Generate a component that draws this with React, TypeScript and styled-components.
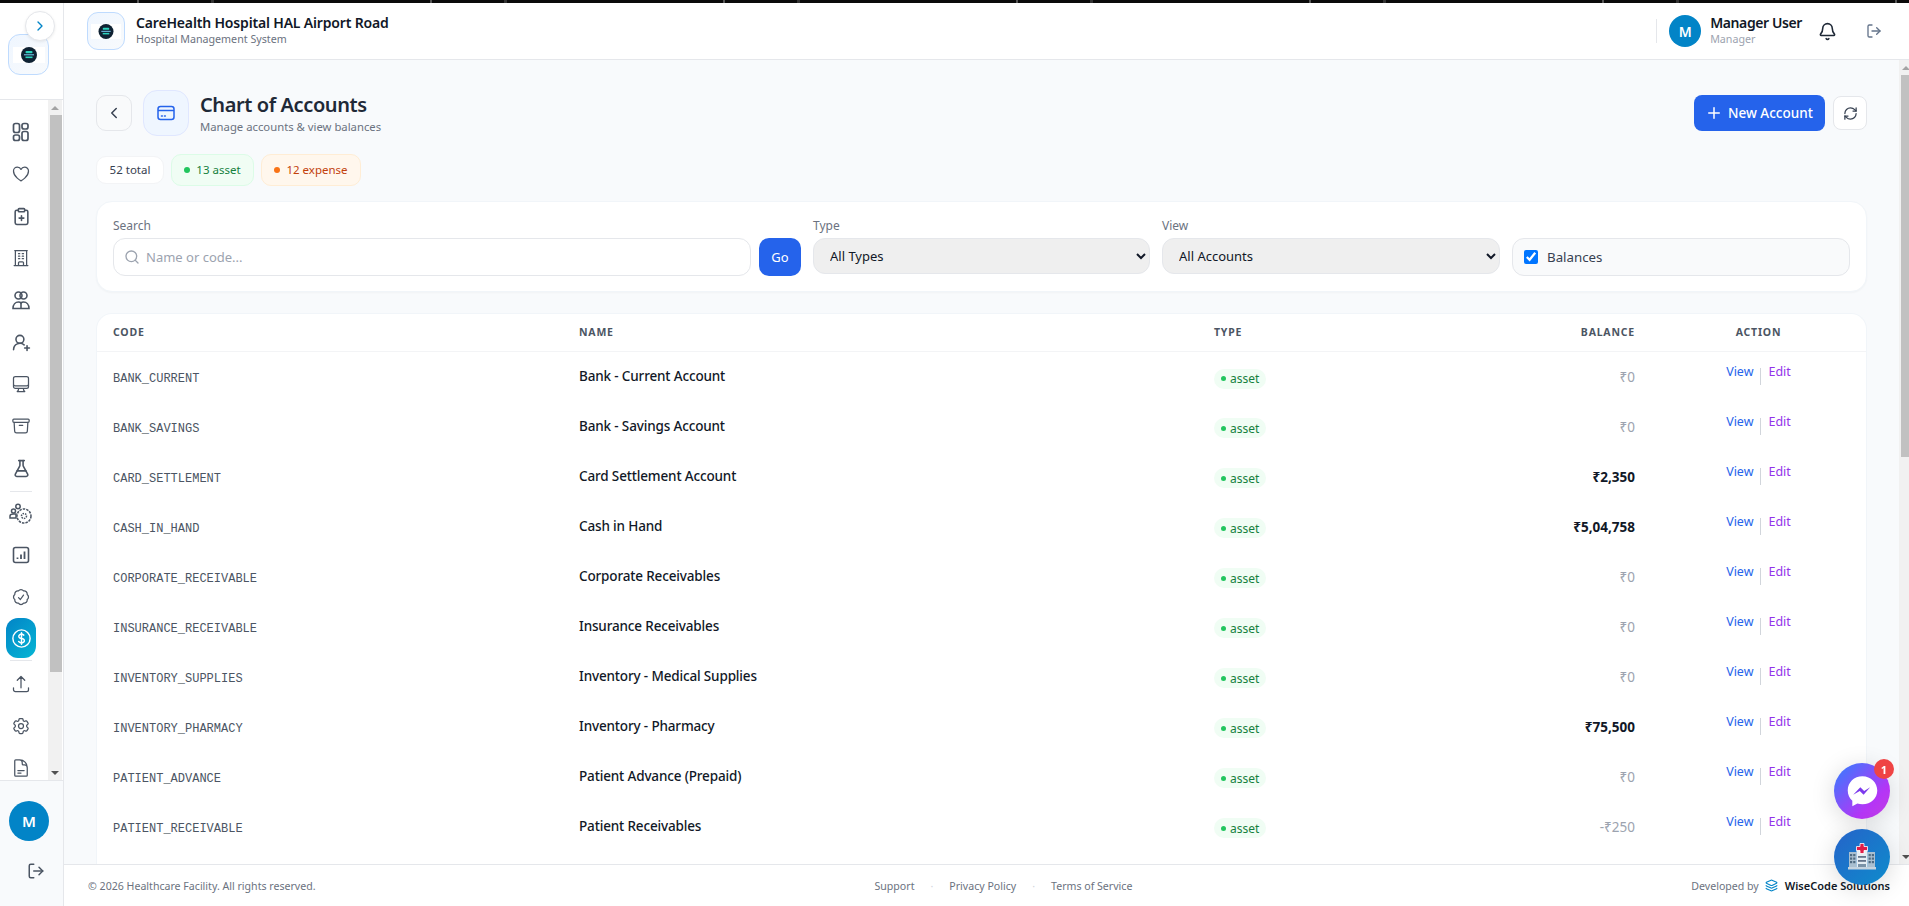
import React from 'react';
import styled, { createGlobalStyle } from 'styled-components';
import {
  Bell,
  ChevronLeft,
  ChevronRight,
  ClipboardPlus,
  FlaskConical,
  Layers,
  LogOut,
  Plus,
  RefreshCw,
  Search,
  UserRoundPlus,
} from 'lucide-react';
import {
  HiOutlineArchiveBox,
  HiOutlineArrowUpTray,
  HiOutlineBuildingOffice,
  HiOutlineCheckBadge,
  HiOutlineCog6Tooth,
  HiOutlineComputerDesktop,
  HiOutlineCurrencyDollar,
  HiOutlineDocumentText,
  HiOutlineHeart,
} from 'react-icons/hi2';

const FONT = '"Noto Sans", "Open Sans", sans-serif';

const GlobalStyle = createGlobalStyle`
  html, body {
    margin: 0;
    height: 100%;
    overflow: hidden;
    font-family: ${FONT};
    color: #111827;
  }
  * { box-sizing: border-box; }
`;

const Page = styled.div`
  height: 906px;
  display: flex;
  flex-direction: column;
  background: #fff;
`;
const NoiseStrip = styled.div`
  height: 3px;
  flex: none;
  background: repeating-linear-gradient(90deg, #0b0b0b 0 137px, #555 137px 139px, #0b0b0b 139px 211px, #333 211px 214px, #0b0b0b 214px 293px);
`;
const Shell = styled.div`
  flex: 1;
  min-height: 0;
  display: flex;
`;
const Sidebar = styled.aside`
  width: 64px;
  flex: none;
  display: flex;
  flex-direction: column;
  border-right: 1px solid #e5e7eb;
  background: #fff;
`;
const SideTop = styled.div`
  height: 97px;
  flex: none;
  position: relative;
  padding: 31px 0 0 8px;
  border-bottom: 1px solid #e5e7eb;
`;
const LogoTile = styled.div<{ $size: number }>`
  width: ${p => p.$size}px;
  height: ${p => p.$size}px;
  flex: none;
  border-radius: ${p => Math.round(p.$size / 3.4)}px;
  border: 1px solid #bfdbfe;
  background: linear-gradient(135deg, #eff6ff, #f8fafc);
  display: flex;
  align-items: center;
  justify-content: center;
`;
const Toggle = styled.button`
  position: absolute;
  left: 25px;
  top: 8px;
  width: 30px;
  height: 30px;
  padding: 0;
  border-radius: 50%;
  border: 1px solid #e5e7eb;
  background: #fff;
  color: #0284c7;
  display: flex;
  align-items: center;
  justify-content: center;
  box-shadow: 0 1px 3px rgba(0, 0, 0, 0.08);
`;
const NavArea = styled.div`
  flex: 1;
  min-height: 0;
  display: flex;
  overflow: hidden;
`;
const NavList = styled.nav`
  width: 48px;
  flex: none;
  display: flex;
  flex-direction: column;
  align-items: center;
  padding: 11px 6px 0 0;
  overflow: hidden;
`;
const NavItem = styled.div<{ $active?: boolean; $short?: boolean }>`
  width: 30px;
  height: ${p => (p.$active || p.$short ? 40 : 42)}px;
  flex: none;
  display: flex;
  align-items: center;
  justify-content: center;
  color: ${p => (p.$active ? '#fff' : '#4b5563')};
  border-radius: 12px;
  background: ${p => (p.$active ? 'linear-gradient(135deg, #0284c7, #06b6d4)' : 'transparent')};
`;
const NavDivider = styled.div`
  width: 22px;
  height: 1px;
  flex: none;
  background: #e5e7eb;
  margin: 2px 0;
`;
const Scrollbar = styled.div<{ $width: number }>`
  width: ${p => p.$width}px;
  flex: none;
  background: #f1f1f1;
  display: flex;
  flex-direction: column;
  align-items: stretch;
`;
const ScrollArrow = styled.div<{ $down?: boolean; $offset: number }>`
  height: 15px;
  flex: none;
  display: flex;
  align-items: center;
  padding-left: ${p => p.$offset}px;
  &::before {
    content: '';
    border-left: 4px solid transparent;
    border-right: 4px solid transparent;
    ${p => (p.$down ? 'border-top: 4px solid #505050;' : 'border-bottom: 4px solid #a3a3a3;')}
  }
`;
const ScrollThumb = styled.div<{ $height: number; $inset: number }>`
  height: ${p => p.$height}px;
  flex: none;
  margin-left: ${p => p.$inset}px;
  background: #c1c1c1;
`;
const ScrollRest = styled.div`
  flex: 1;
`;
const SideBottom = styled.div`
  height: 126px;
  flex: none;
  border-top: 1px solid #e5e7eb;
  background: #f8fafc;
  display: flex;
  flex-direction: column;
  padding: 20px 0 0 9px;
`;
const Avatar = styled.div<{ $size: number }>`
  width: ${p => p.$size}px;
  height: ${p => p.$size}px;
  flex: none;
  border-radius: 50%;
  background: #0284c7;
  color: #fff;
  font-weight: 600;
  font-size: ${p => (p.$size > 36 ? 15 : 14)}px;
  display: flex;
  align-items: center;
  justify-content: center;
`;
const SideLogout = styled.div`
  margin: 21px 0 0 18px;
  color: #4b5563;
  display: flex;
`;
const Main = styled.div`
  flex: 1;
  min-width: 0;
  display: flex;
  flex-direction: column;
`;
const TopBar = styled.header`
  height: 57px;
  flex: none;
  display: flex;
  align-items: center;
  padding: 0 27px 0 23px;
  background: #fff;
  border-bottom: 1px solid #e5e7eb;
`;
const Brand = styled.div`
  display: flex;
  align-items: center;
  gap: 11px;
  flex: 1;
`;
const BrandText = styled.div`
  padding-bottom: 2px;
`;
const BrandName = styled.div`
  font-size: 14px;
  font-weight: 600;
  line-height: 18px;
  letter-spacing: -0.17px;
  color: #111827;
`;
const BrandSub = styled.div`
  font-size: 10.7px;
  line-height: 15px;
  color: #6b7280;
`;
const UserBlock = styled.div`
  display: flex;
  align-items: center;
  gap: 9px;
  padding-left: 12px;
  border-left: 1px solid #e5e7eb;
  height: 24px;
`;
const UserName = styled.div`
  font-size: 14px;
  font-weight: 600;
  line-height: 18px;
  letter-spacing: -0.4px;
  color: #111827;
`;
const UserRole = styled.div`
  font-size: 10.7px;
  line-height: 15px;
  color: #9ca3af;
`;
const TopIcon = styled.div<{ $muted?: boolean; $gap: number }>`
  display: flex;
  margin-left: ${p => p.$gap}px;
  color: ${p => (p.$muted ? '#64748b' : '#1f2937')};
`;
const Body = styled.div`
  flex: 1;
  min-height: 0;
  display: flex;
  background: #f8fafc;
`;
const Content = styled.main`
  flex: 1;
  min-width: 0;
  padding: 30px 32px 0 32px;
  overflow: hidden;
`;
const TitleRow = styled.div`
  display: flex;
  align-items: center;
  height: 46px;
`;
const BackButton = styled.button`
  width: 36px;
  height: 36px;
  padding: 0;
  border-radius: 10px;
  border: 1px solid #e5e7eb;
  background: #f9fafb;
  color: #374151;
  display: flex;
  align-items: center;
  justify-content: center;
  margin-right: 11px;
`;
const TitleIcon = styled.div`
  width: 46px;
  height: 46px;
  border-radius: 14px;
  border: 1px solid #e0e7ff;
  background: #eff6ff;
  color: #2563eb;
  display: flex;
  align-items: center;
  justify-content: center;
  margin-right: 11px;
`;
const TitleText = styled.div`
  flex: 1;
`;
const PageTitle = styled.h1`
  margin: 0;
  font-size: 20px;
  font-weight: 600;
  line-height: 28px;
  letter-spacing: -0.4px;
  color: #1f2937;
`;
const PageSub = styled.div`
  font-size: 11.3px;
  line-height: 16px;
  color: #6b7280;
`;
const PrimaryButton = styled.button`
  height: 36px;
  width: 131px;
  border: 0;
  border-radius: 8px;
  background: #2563eb;
  color: #fff;
  font-family: ${FONT};
  font-size: 13.5px;
  font-weight: 500;
  display: flex;
  align-items: center;
  gap: 5px;
  padding: 0 0 0 11px;
  margin-right: 8px;
`;
const RefreshButton = styled.button`
  width: 34px;
  height: 34px;
  padding: 0;
  border-radius: 8px;
  border: 1px solid #e5e7eb;
  background: #fff;
  color: #374151;
  display: flex;
  align-items: center;
  justify-content: center;
`;
const ChipRow = styled.div`
  display: flex;
  align-items: center;
  gap: 7px;
  margin-top: 18px;
  height: 32px;
`;
const Chip = styled.div<{ $bg: string; $border: string; $color: string; $h: number; $w: number }>`
  height: ${p => p.$h}px;
  width: ${p => p.$w}px;
  border-radius: 10px;
  background: ${p => p.$bg};
  border: 1px solid ${p => p.$border};
  color: ${p => p.$color};
  font-size: 11.5px;
  padding-bottom: 1px;
  display: flex;
  align-items: center;
  justify-content: center;
  gap: 6px;
`;
const Dot = styled.span<{ $color: string; $size: number }>`
  width: ${p => p.$size}px;
  height: ${p => p.$size}px;
  flex: none;
  border-radius: 50%;
  background: ${p => p.$color};
`;
const FilterCard = styled.section`
  margin-top: 15px;
  height: 91px;
  border-radius: 16px;
  background: #fff;
  border: 1px solid #f1f5f9;
  box-shadow: 0 1px 2px rgba(0, 0, 0, 0.03);
  padding: 15px 16px 0 16px;
  display: grid;
  grid-template-columns: 688px 337px 338px 338px;
  column-gap: 12px;
`;
const Field = styled.div`
  display: flex;
  flex-direction: column;
`;
const FieldLabel = styled.label`
  font-size: 12px;
  line-height: 18px;
  height: 21px;
  color: #6b7280;
`;
const SearchRow = styled.div`
  display: flex;
  gap: 8px;
`;
const SearchBox = styled.div`
  flex: 1;
  height: 38px;
  border: 1px solid #e5e7eb;
  border-radius: 12px;
  background: #fff;
  display: flex;
  align-items: center;
  gap: 6px;
  padding: 0 10px;
  color: #9ca3af;
`;
const SearchInput = styled.input`
  flex: 1;
  border: 0;
  outline: 0;
  padding: 0;
  background: transparent;
  font-family: ${FONT};
  font-size: 13px;
  &::placeholder {
    color: #9ca3af;
  }
`;
const GoButton = styled.button`
  width: 42px;
  height: 38px;
  padding: 0;
  border: 0;
  border-radius: 10px;
  background: #2563eb;
  color: #fff;
  font-family: ${FONT};
  font-size: 13px;
`;
const Select = styled.select`
  height: 36px;
  border: 1px solid #e5e7eb;
  border-radius: 12px;
  background: #efefef;
  color: #111827;
  font-family: ${FONT};
  font-size: 13px;
  padding: 0 12px;
`;
const BalanceToggle = styled.label`
  height: 38px;
  margin-top: 21px;
  border: 1px solid #e5e7eb;
  border-radius: 12px;
  background: #f9fafb;
  display: flex;
  align-items: center;
  gap: 9px;
  padding: 0 11px;
  font-size: 13.3px;
  color: #374151;
  input {
    margin: 0;
    width: 14px;
    height: 14px;
    accent-color: #0075ff;
  }
`;
const TableCard = styled.section`
  margin-top: 21px;
  min-height: 600px;
  border-radius: 16px 16px 0 0;
  background: #fff;
  border: 1px solid #f1f5f9;
  border-bottom: 0;
`;
const Table = styled.table`
  width: 100%;
  border-collapse: collapse;
  table-layout: fixed;
`;
const Th = styled.th<{ $w?: number; $align?: string }>`
  height: 37px;
  padding: 0 16px;
  width: ${p => (p.$w ? `${p.$w}px` : 'auto')};
  text-align: ${p => p.$align || 'left'};
  font-size: 10.5px;
  font-weight: 700;
  letter-spacing: 0.8px;
  color: #4b5563;
  border-bottom: 1px solid #f3f4f6;
`;
const Td = styled.td<{ $align?: string }>`
  height: 50px;
  padding: 0 16px;
  text-align: ${p => p.$align || 'left'};
  vertical-align: middle;
`;
const CodeCell = styled.span`
  font-family: "Liberation Mono", monospace;
  font-size: 12px;
  color: #4b5563;
`;
const NameCell = styled.span`
  font-size: 13.5px;
  font-weight: 500;
  letter-spacing: -0.15px;
  color: #111827;
  position: relative;
  top: -1px;
`;
const TypeBadge = styled.span`
  display: inline-flex;
  align-items: center;
  gap: 4px;
  height: 20px;
  padding: 0 7px;
  border-radius: 10px;
  background: #f0fdf4;
  color: #15803d;
  font-size: 12px;
`;
const Balance = styled.span<{ $zero: boolean }>`
  font-size: 13.5px;
  font-weight: ${p => (p.$zero ? 400 : 700)};
  color: ${p => (p.$zero ? '#9ca3af' : '#111827')};
`;
const Actions = styled.div`
  display: flex;
  justify-content: center;
  align-items: flex-start;
  gap: 7px;
`;
const ActionLink = styled.a<{ $color: string }>`
  font-size: 12.5px;
  line-height: 16px;
  color: ${p => p.$color};
  position: relative;
  top: -4px;
`;
const ActionRule = styled.span`
  width: 1px;
  height: 17px;
  background: #d1d5db;
`;
const Footer = styled.footer`
  height: 42px;
  flex: none;
  display: flex;
  justify-content: space-between;
  align-items: center;
  padding: 0 19px 0 24px;
  background: #fff;
  border-top: 1px solid #e5e7eb;
  font-size: 10.6px;
  color: #6b7280;
`;
const FooterLinks = styled.div`
  display: flex;
  gap: 16px;
  color: #6b7280;
`;
const FooterDot = styled.span`
  color: #d1d5db;
`;
const FooterRight = styled.div`
  display: flex;
  align-items: center;
  gap: 6px;
`;
const Company = styled.span`
  margin-left: 1px;
  font-size: 11px;
  font-weight: 600;
  color: #111827;
`;
const FloatButton = styled.div<{ $bottom: number; $bg: string }>`
  position: fixed;
  right: 19px;
  bottom: ${p => p.$bottom}px;
  width: 56px;
  height: 56px;
  border-radius: 50%;
  background: ${p => p.$bg};
  box-shadow: 0 4px 24px rgba(0, 0, 0, 0.15);
  display: flex;
  align-items: center;
  justify-content: center;
`;
const Badge = styled.span`
  position: absolute;
  top: -4px;
  right: -4px;
  width: 20px;
  height: 20px;
  border-radius: 50%;
  background: #ef4444;
  color: #fff;
  font-size: 11px;
  font-weight: 700;
  display: flex;
  align-items: center;
  justify-content: center;
`;

interface Account {
  code: string;
  name: string;
  balance: string;
}

const accounts: Account[] = [
  { code: 'BANK_CURRENT', name: 'Bank - Current Account', balance: '₹0' },
  { code: 'BANK_SAVINGS', name: 'Bank - Savings Account', balance: '₹0' },
  { code: 'CARD_SETTLEMENT', name: 'Card Settlement Account', balance: '₹2,350' },
  { code: 'CASH_IN_HAND', name: 'Cash in Hand', balance: '₹5,04,758' },
  { code: 'CORPORATE_RECEIVABLE', name: 'Corporate Receivables', balance: '₹0' },
  { code: 'INSURANCE_RECEIVABLE', name: 'Insurance Receivables', balance: '₹0' },
  { code: 'INVENTORY_SUPPLIES', name: 'Inventory - Medical Supplies', balance: '₹0' },
  { code: 'INVENTORY_PHARMACY', name: 'Inventory - Pharmacy', balance: '₹75,500' },
  { code: 'PATIENT_ADVANCE', name: 'Patient Advance (Prepaid)', balance: '₹0' },
  { code: 'PATIENT_RECEIVABLE', name: 'Patient Receivables', balance: '-₹250' },
];

function DashboardIcon() {
  return (
    <svg width="20" height="20" viewBox="0 0 20 20" fill="none" stroke="currentColor" strokeWidth="1.7">
      <rect x="2.500" y="1.500" width="6" height="9" rx="2" />
      <rect x="2.500" y="13" width="6" height="5.500" rx="2" />
      <rect x="11" y="1.500" width="6" height="5.500" rx="2" />
      <rect x="11" y="9.500" width="6" height="9" rx="2" />
    </svg>
  );
}

function StaffIcon() {
  return (
    <svg width="20" height="20" viewBox="0 0 20 20" fill="none" stroke="currentColor" strokeWidth="1.6">
      <circle cx="7.500" cy="5.500" r="3.500" />
      <circle cx="12.500" cy="5.500" r="3.500" />
      <path d="M2 18.500c0-4 2.500-6.500 5.500-6.500 1.200 0 2 .3 2.500 1 .5-.7 1.300-1 2.500-1 3 0 5.500 2.500 5.500 6.500z" />
      <path d="M10 13v5" />
    </svg>
  );
}

function TeamGearIcon() {
  return (
    <svg width="24" height="22" viewBox="0 0 24 22" fill="none" stroke="currentColor" strokeWidth="1.5">
      <circle cx="15" cy="13" r="7" strokeDasharray="2.500 1" />
      <circle cx="15" cy="13" r="2.500" strokeDasharray="1.500 1" />
      <circle cx="9" cy="3.500" r="2.200" />
      <circle cx="4.500" cy="8" r="2" />
      <path d="M1 15v-2c0-1.500 1.500-2 3.500-2h2.500v4z" />
    </svg>
  );
}

function ReportIcon() {
  return (
    <svg width="20" height="20" viewBox="0 0 20 20" fill="none" stroke="currentColor" strokeWidth="1.6">
      <rect x="2.500" y="2.500" width="15" height="15" rx="2" />
      <path d="M6.500 14v-1.500M10 14V9.500M13.500 14V6.500" strokeWidth="1.800" />
    </svg>
  );
}

function CardIcon() {
  return (
    <svg width="20" height="20" viewBox="0 0 20 20" fill="none" stroke="currentColor" strokeWidth="1.5">
      <rect x="2" y="3.500" width="16" height="13" rx="2.500" />
      <path d="M2 7.500h16" />
      <path d="M5.500 13h.8M8.500 13h.8" strokeWidth="1.600" strokeLinecap="round" />
    </svg>
  );
}

function HospitalLogo({ width }: { width: number }) {
  return (
    <svg width={width} height={width / 2} viewBox="0 0 32 16">
      <rect width="32" height="16" fill="#fff" />
      <circle cx="16" cy="8" r="8" fill="#0f2233" />
      <rect x="12.500" y="4" width="7" height="2.200" rx="1" fill="#2dd4bf" />
      <rect x="11" y="7.300" width="10" height="1" fill="#7dd3fc" />
      <rect x="12.500" y="9.500" width="7" height="1.600" fill="#2dd4bf" />
    </svg>
  );
}

function MessengerIcon() {
  return (
    <svg width="35" height="35" viewBox="0 0 32 32">
      <path d="M16 2C8.300 2 2.500 7.600 2.500 15c0 3.900 1.600 7.200 4.200 9.500v5l4.600-2.500c1.500.5 3.100.7 4.700.7 7.700 0 13.500-5.600 13.500-12.700S23.700 2 16 2z" fill="#fff" />
      <path d="M7.500 19l6.500-7 3.500 3.500 5.500-3.500-6 7-3.500-3.500z" fill="#7c3aed" />
    </svg>
  );
}

function HospitalBuilding() {
  const windows = [11, 14.500, 18];
  return (
    <svg width="28" height="28" viewBox="0 0 28 28">
      <rect x="1" y="9" width="7.500" height="15" fill="#a9bfd0" />
      <rect x="19.500" y="9" width="7.500" height="15" fill="#a9bfd0" />
      {windows.map(y => (
        <g key={y} fill="#4f6b82">
          <rect x="2" y={y} width="2.200" height="2.200" />
          <rect x="5.200" y={y} width="2.200" height="2.200" />
          <rect x="20.600" y={y} width="2.200" height="2.200" />
          <rect x="23.800" y={y} width="2.200" height="2.200" />
        </g>
      ))}
      <rect x="8.500" y="6" width="11" height="18" fill="#e5edf3" />
      <path d="M12 .500h4v3h3.500v4H16v3h-4v-3H8.500v-4H12z" fill="#e11d48" stroke="#fff" strokeWidth=".8" />
      <rect x="10" y="13" width="8" height="1.800" fill="#64748b" />
      <rect x="10" y="17" width="8" height="1.800" fill="#64748b" />
      <rect x="10" y="21" width="8" height="3" fill="#7b93a8" />
      <rect x="0" y="24" width="28" height="2.500" fill="#c4d3df" />
    </svg>
  );
}

export default function App() {
  return (
    <Page>
      <GlobalStyle />
      <NoiseStrip />
      <Shell>
        <Sidebar>
          <SideTop>
            <LogoTile $size={41}>
              <HospitalLogo width={32} />
            </LogoTile>
            <Toggle>
              <ChevronRight size={16} />
            </Toggle>
          </SideTop>
          <NavArea>
            <NavList>
              <NavItem><DashboardIcon /></NavItem>
              <NavItem><HiOutlineHeart size={20} /></NavItem>
              <NavItem><ClipboardPlus size={19} /></NavItem>
              <NavItem><HiOutlineBuildingOffice size={20} /></NavItem>
              <NavItem><StaffIcon /></NavItem>
              <NavItem><UserRoundPlus size={19} /></NavItem>
              <NavItem><HiOutlineComputerDesktop size={20} /></NavItem>
              <NavItem><HiOutlineArchiveBox size={20} /></NavItem>
              <NavItem><FlaskConical size={19} /></NavItem>
              <NavDivider />
              <NavItem $short><TeamGearIcon /></NavItem>
              <NavItem><ReportIcon /></NavItem>
              <NavItem><HiOutlineCheckBadge size={20} /></NavItem>
              <NavItem $active><HiOutlineCurrencyDollar size={23} /></NavItem>
              <NavDivider />
              <NavItem><HiOutlineArrowUpTray size={20} /></NavItem>
              <NavItem><HiOutlineCog6Tooth size={20} /></NavItem>
              <NavItem><HiOutlineDocumentText size={20} /></NavItem>
            </NavList>
            <Scrollbar $width={14}>
              <ScrollArrow $offset={3} />
              <ScrollThumb $height={557} $inset={2} />
              <ScrollRest />
              <ScrollArrow $down $offset={3} />
            </Scrollbar>
          </NavArea>
          <SideBottom>
            <Avatar $size={40}>M</Avatar>
            <SideLogout>
              <LogOut size={18} />
            </SideLogout>
          </SideBottom>
        </Sidebar>
        <Main>
          <TopBar>
            <Brand>
              <LogoTile $size={38}>
                <HospitalLogo width={30} />
              </LogoTile>
              <BrandText>
                <BrandName>CareHealth Hospital HAL Airport Road</BrandName>
                <BrandSub>Hospital Management System</BrandSub>
              </BrandText>
            </Brand>
            <UserBlock>
              <Avatar $size={32}>M</Avatar>
              <BrandText>
                <UserName>Manager User</UserName>
                <UserRole>Manager</UserRole>
              </BrandText>
            </UserBlock>
            <TopIcon $gap={16}>
              <Bell size={19} />
            </TopIcon>
            <TopIcon $gap={29} $muted>
              <LogOut size={16} />
            </TopIcon>
          </TopBar>
          <Body>
            <Content>
              <TitleRow>
                <BackButton>
                  <ChevronLeft size={18} />
                </BackButton>
                <TitleIcon>
                  <CardIcon />
                </TitleIcon>
                <TitleText>
                  <PageTitle>Chart of Accounts</PageTitle>
                  <PageSub>Manage accounts &amp; view balances</PageSub>
                </TitleText>
                <PrimaryButton>
                  <Plus size={18} />
                  New Account
                </PrimaryButton>
                <RefreshButton>
                  <RefreshCw size={15} />
                </RefreshButton>
              </TitleRow>
              <ChipRow>
                <Chip $bg="#fff" $border="#f3f4f6" $color="#374151" $h={28} $w={68}>52 total</Chip>
                <Chip $bg="#f0fdf4" $border="#dcfce7" $color="#15803d" $h={32} $w={83}>
                  <Dot $color="#22c55e" $size={6} />
                  13 asset
                </Chip>
                <Chip $bg="#fff7ed" $border="#ffedd5" $color="#c2410c" $h={32} $w={100}>
                  <Dot $color="#f97316" $size={6} />
                  12 expense
                </Chip>
              </ChipRow>
              <FilterCard>
                <Field>
                  <FieldLabel>Search</FieldLabel>
                  <SearchRow>
                    <SearchBox>
                      <Search size={16} />
                      <SearchInput placeholder="Name or code..." readOnly />
                    </SearchBox>
                    <GoButton>Go</GoButton>
                  </SearchRow>
                </Field>
                <Field>
                  <FieldLabel>Type</FieldLabel>
                  <Select defaultValue="all">
                    <option value="all">All Types</option>
                  </Select>
                </Field>
                <Field>
                  <FieldLabel>View</FieldLabel>
                  <Select defaultValue="all">
                    <option value="all">All Accounts</option>
                  </Select>
                </Field>
                <BalanceToggle>
                  <input type="checkbox" defaultChecked />
                  Balances
                </BalanceToggle>
              </FilterCard>
              <TableCard>
                <Table>
                  <thead>
                    <tr>
                      <Th $w={466}>CODE</Th>
                      <Th $w={635}>NAME</Th>
                      <Th>TYPE</Th>
                      <Th $w={145} $align="right">BALANCE</Th>
                      <Th $w={215} $align="center">ACTION</Th>
                    </tr>
                  </thead>
                  <tbody>
                    {accounts.map(account => (
                      <tr key={account.code}>
                        <Td><CodeCell>{account.code}</CodeCell></Td>
                        <Td><NameCell>{account.name}</NameCell></Td>
                        <Td>
                          <TypeBadge>
                            <Dot $color="#22c55e" $size={5} />
                            asset
                          </TypeBadge>
                        </Td>
                        <Td $align="right">
                          <Balance $zero={account.balance === '₹0' || account.balance.startsWith('-')}>{account.balance}</Balance>
                        </Td>
                        <Td>
                          <Actions>
                            <ActionLink $color="#2563eb">View</ActionLink>
                            <ActionRule />
                            <ActionLink $color="#9333ea">Edit</ActionLink>
                          </Actions>
                        </Td>
                      </tr>
                    ))}
                  </tbody>
                </Table>
              </TableCard>
            </Content>
            <Scrollbar $width={10}>
              <ScrollArrow $offset={3} />
              <ScrollThumb $height={382} $inset={2} />
              <ScrollRest />
              <ScrollArrow $down $offset={3} />
            </Scrollbar>
          </Body>
          <Footer>
            <span>© 2026 Healthcare Facility. All rights reserved.</span>
            <FooterLinks>
              <span>Support</span>
              <FooterDot>·</FooterDot>
              <span>Privacy Policy</span>
              <FooterDot>·</FooterDot>
              <span>Terms of Service</span>
            </FooterLinks>
            <FooterRight>
              Developed by
              <Layers size={13} color="#0284c7" />
              <Company>WiseCode Solutions</Company>
            </FooterRight>
          </Footer>
        </Main>
      </Shell>
      <FloatButton $bottom={87} $bg="linear-gradient(135deg, #2f80ff, #b535f6 70%, #c13ee0)">
        <MessengerIcon />
        <Badge>1</Badge>
      </FloatButton>
      <FloatButton $bottom={21} $bg="linear-gradient(135deg, #2563c9, #0e8ccc)">
        <HospitalBuilding />
      </FloatButton>
    </Page>
  );
}
